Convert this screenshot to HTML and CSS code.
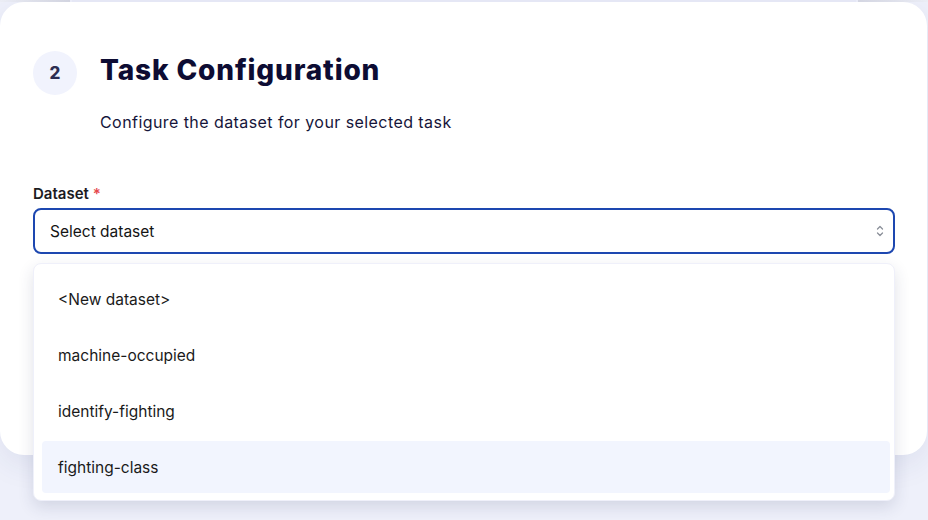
FILE: index.html
```html
<!DOCTYPE html>
<html>
<head>
<meta charset="utf-8">
<link rel="stylesheet" href="styles.css">
</head>
<body>
<div class="backdrop">
  <div class="strip">
    <span class="strip-a"></span>
    <span class="strip-b"></span>
    <span class="strip-c"></span>
  </div>
  <section class="card">
    <header class="step">
      <div class="step-num">2</div>
      <div class="step-text">
        <h1 class="step-title">Task Configuration</h1>
        <p class="step-sub">Configure the dataset for your selected task</p>
      </div>
    </header>
    <div class="field">
      <label class="field-label">Dataset <span class="req">*</span></label>
      <div class="select">
        <span class="select-value">Select dataset</span>
        <svg class="chev" width="10" height="14" viewBox="0 0 10 14" fill="none" stroke="#8a8f99" stroke-width="1.3" stroke-linecap="round" stroke-linejoin="round">
          <path d="M2.5 5 L5 2.5 L7.5 5"/>
          <path d="M2.5 9 L5 11.5 L7.5 9"/>
        </svg>
      </div>
      <ul class="menu">
        <li class="opt">&lt;New dataset&gt;</li>
        <li class="opt">machine-occupied</li>
        <li class="opt">identify-fighting</li>
        <li class="opt active">fighting-class</li>
      </ul>
    </div>
  </section>
</div>
</body>
</html>
```

FILE: styles.css
```css
* { box-sizing: border-box; }
html, body { margin: 0; padding: 0; }
body {
  width: 928px;
  height: 520px;
  overflow: hidden;
  background: #eef0fa;
  font-family: Inter, "Liberation Sans", sans-serif;
}
.backdrop {
  position: relative;
  height: 520px;
}
.strip {
  display: flex;
  height: 2px;
}
.strip-a { width: 70px; background: linear-gradient(90deg, #eceef6, #d6d8e2); }
.strip-b { flex: 1; margin-left: 2px; background: #e9ebf7; }
.strip-c { width: 70px; margin-left: 2px; background: linear-gradient(90deg, #d8dae4, #eceef6); }
.card {
  margin: 0 1px 0 0;
  height: 453px;
  background: #fff;
  border-radius: 24px;
  box-shadow: 0 10px 30px rgba(40, 50, 110, 0.08);
  padding: 46px 32px 0 33px;
  position: relative;
}
.step {
  display: flex;
  gap: 23px;
  align-items: flex-start;
}
.step-num {
  width: 44px;
  height: 44px;
  border-radius: 50%;
  background: #f1f3fd;
  color: #2c2d52;
  font-weight: 800;
  font-size: 17px;
  display: flex;
  align-items: center;
  justify-content: center;
  margin-top: 3px;
}
.step-text { padding-top: 2px; }
.step-title {
  margin: 0;
  font-size: 28px;
  line-height: 40px;
  font-weight: 800;
  color: #0d0c33;
  letter-spacing: 0.85px;
}
.step-sub {
  margin: 21px 0 0;
  font-size: 16px;
  line-height: 22px;
  color: #16153a;
  letter-spacing: 0.43px;
}
.field {
  margin-top: 51px;
  position: relative;
}
.field-label {
  display: block;
  font-size: 15px;
  font-weight: 600;
  color: #1b1b1f;
  line-height: 20px;
  margin-bottom: 4px;
}
.req { color: #e5484d; }
.select {
  height: 46px;
  border: 2px solid #1d47b0;
  border-radius: 8px;
  display: flex;
  align-items: center;
  justify-content: space-between;
  padding: 0 8px 0 15px;
}
.select-value {
  font-size: 15.5px;
  color: #141414;
}
.chev { display: block; }
.menu {
  position: absolute;
  left: 0;
  right: 0;
  top: 79px;
  margin: 0;
  list-style: none;
  background: #fff;
  border: 1px solid #eff0fa;
  border-radius: 8px;
  box-shadow: 0 6px 16px rgba(40, 50, 90, 0.14);
  padding: 9px 4px 7px 8px;
  display: flex;
  flex-direction: column;
  gap: 4px;
  z-index: 2;
}
.opt {
  height: 52px;
  display: flex;
  align-items: center;
  padding-left: 16px;
  font-size: 15.5px;
  color: #1a1a1a;
  border-radius: 4px;
}
.opt.active { background: #f2f5fe; }
```
